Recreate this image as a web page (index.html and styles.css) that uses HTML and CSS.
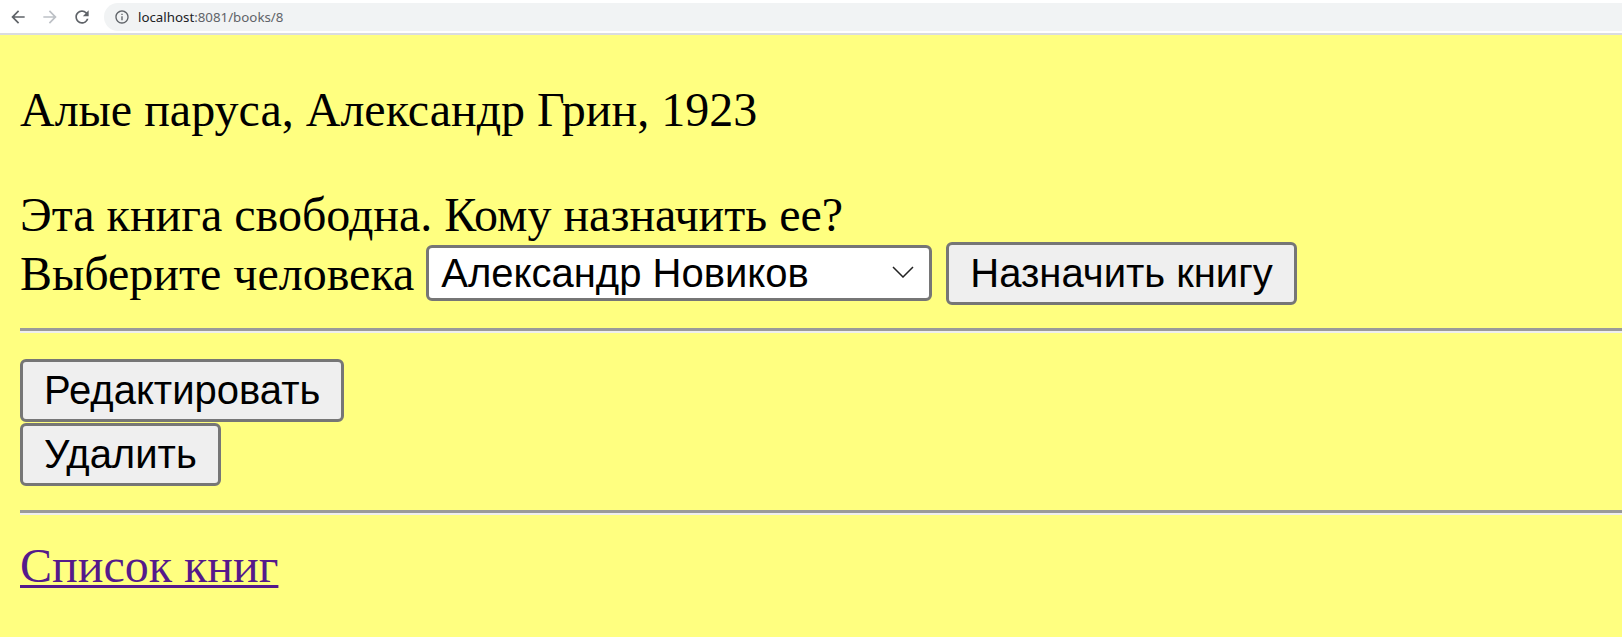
FILE: index.html
```html
<!DOCTYPE html>
<html lang="ru">
<head>
<meta charset="utf-8">
<title>Алые паруса</title>
<link rel="stylesheet" href="styles.css">
</head>
<body>
<header class="toolbar">
  <div class="nav">
    <svg class="tb-icon" viewBox="0 0 24 24" width="20" height="20"><path fill="#5f6368" d="M20 11H7.83l5.59-5.59L12 4l-8 8 8 8 1.41-1.41L7.83 13H20v-2z"/></svg>
    <svg class="tb-icon" viewBox="0 0 24 24" width="20" height="20"><path fill="#bdc1c6" d="M4 11h12.17l-5.59-5.59L12 4l8 8-8 8-1.41-1.41L16.170 13H4v-2z"/></svg>
    <svg class="tb-icon" viewBox="0 0 24 24" width="20" height="20"><path fill="#5f6368" d="M17.65 6.35A7.958 7.958 0 0 0 12 4c-4.42 0-7.99 3.58-7.99 8s3.57 8 7.99 8c3.730 0 6.84-2.55 7.73-6h-2.08A5.99 5.99 0 0 1 12 18c-3.31 0-6-2.69-6-6s2.690-6 6-6c1.66 0 3.14.69 4.22 1.78L13 11h7V4l-2.35 2.35z"/></svg>
  </div>
  <div class="omnibox">
    <svg class="info" viewBox="0 0 24 24" width="16" height="16"><path fill="#5f6368" d="M11 7h2v2h-2zm0 4h2v6h-2zm1-9C6.48 2 2 6.48 2 12s4.48 10 10 10 10-4.48 10-10S17.52 2 12 2zm0 18c-4.41 0-8-3.59-8-8s3.59-8 8-8 8 3.59 8 8-3.59 8-8 8z"/></svg>
    <span class="url"><span class="host">localhost</span><span class="path">:8081/books/8</span></span>
  </div>
</header>
<main class="page">
  <p class="book-title">Алые паруса, Александр Грин, 1923</p>
  <form class="assign">
    <p class="status">Эта книга свободна. Кому назначить ее?</p>
    <div class="row">
      <label class="row-label" for="person">Выберите человека</label>
      <span class="select-wrap">
        <select id="person" class="person"><option>Александр Новиков</option></select>
        <svg class="chevron" viewBox="0 0 22 12" width="22" height="12"><path d="M1 1l10 10 10-10" fill="none" stroke="#222" stroke-width="1.5"/></svg>
      </span>
      <button type="button" class="btn">Назначить книгу</button>
    </div>
  </form>
  <hr class="rule">
  <div class="actions">
    <form class="action"><button type="button" class="btn">Редактировать</button></form>
    <form class="action"><button type="button" class="btn">Удалить</button></form>
  </div>
  <hr class="rule rule-second">
  <p class="list-link"><a class="back-link" href="#">Список книг</a></p>
</main>
</body>
</html>
```
FILE: styles.css
```css
html, body {
  margin: 0;
  padding: 0;
}

body {
  background: #ffff80;
  font-family: "Liberation Serif", "Times New Roman", serif;
  height: 637px;
  overflow: hidden;
}

/* Browser toolbar */
.toolbar {
  display: flex;
  align-items: center;
  height: 33px;
  background: #ffffff;
  border-bottom: 2px solid #dadce0;
}

.nav {
  display: flex;
  align-items: center;
  gap: 12px;
  padding-left: 8px;
}

.tb-icon {
  display: block;
}

.omnibox {
  flex: 1;
  display: flex;
  align-items: center;
  gap: 8px;
  height: 28px;
  margin-left: 12px;
  padding-left: 10px;
  background: #f1f3f4;
  border-radius: 14px 0 0 14px;
}

.info {
  display: block;
}

.url {
  font-family: "Noto Sans", "Open Sans", sans-serif;
  font-size: 13.3px;
  color: #5f6368;
}

.host {
  color: #202124;
}

/* Page */
.page {
  display: flow-root;
  padding-left: 20px;
  font-size: 48px;
  line-height: 55px;
  color: #000;
}

.book-title {
  margin: 47px 0 0;
}

.assign {
  margin: 0;
}

.status {
  margin: 50px 0 0;
}

.row {
  display: flex;
  align-items: center;
  gap: 12px;
  height: 62px;
}

.row-label {
  white-space: nowrap;
}

.select-wrap {
  position: relative;
  display: block;
  margin-right: 2px;
}

.person {
  display: block;
  -webkit-appearance: none;
  appearance: none;
  width: 506px;
  height: 56px;
  margin: 0;
  padding: 0 40px 0 12px;
  background: #ffffff;
  border: 3px solid #767676;
  border-radius: 6px;
  font-family: "Liberation Sans", Arial, sans-serif;
  font-size: 40px;
  color: #000;
}

.chevron {
  position: absolute;
  right: 18px;
  top: 21px;
  pointer-events: none;
}

.btn {
  display: block;
  margin: 0;
  padding: 5px 21px;
  background: #efefef;
  border: 3px solid #767676;
  border-radius: 6px;
  font-family: "Liberation Sans", Arial, sans-serif;
  font-size: 40px;
  line-height: 47px;
  color: #000;
  white-space: nowrap;
}

.rule {
  height: 0;
  margin: 24px 0 0;
  border: 0;
  border-top: 3px solid #9a9a9a;
  border-bottom: 2px solid #eeeeee;
}

.rule-second {
  margin-top: 24px;
}

.actions {
  display: flex;
  flex-direction: column;
  align-items: flex-start;
  gap: 1px;
  margin-top: 26px;
}

.action {
  margin: 0;
}

.list-link {
  margin: 23px 0 0;
}

.back-link {
  color: #551a8b;
  text-decoration: underline;
  text-decoration-thickness: 3px;
  text-underline-offset: 3px;
}
```
